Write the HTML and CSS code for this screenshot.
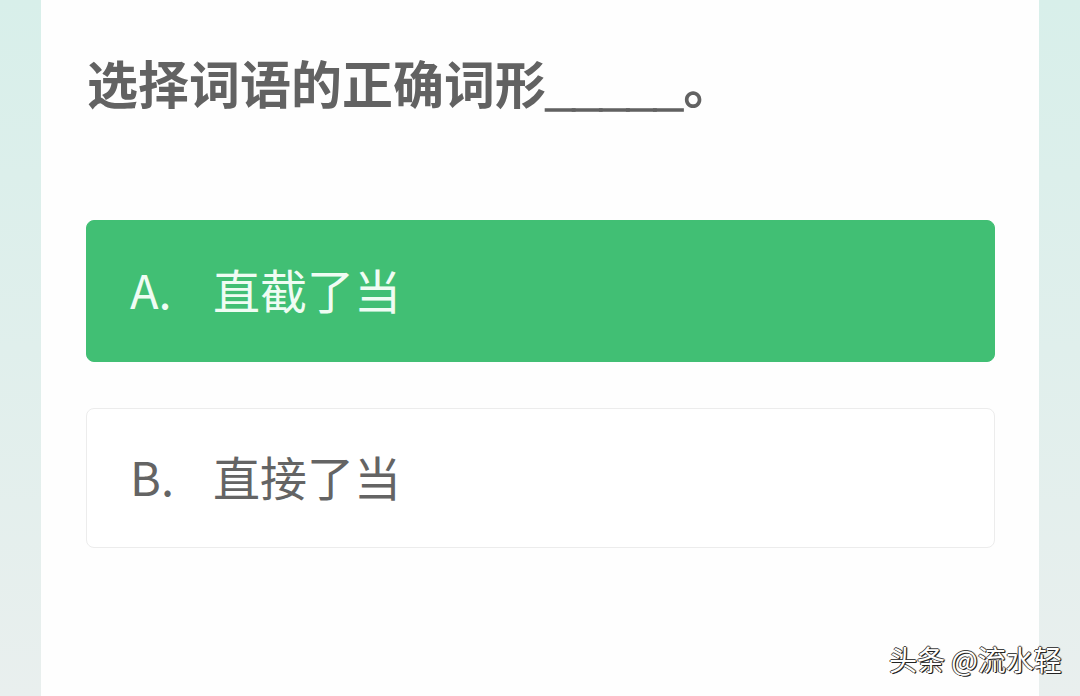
FILE: index.html
```html
<!DOCTYPE html>
<html lang="zh">
<head>
<meta charset="utf-8">
<link rel="stylesheet" href="styles.css">
</head>
<body>
<div class="page">
  <main class="panel">
    <h1 class="question">选择词语的正确词形<span class="blank">_____</span>。</h1>
    <div class="options">
      <div class="option selected"><span class="letter">A.</span><span class="word">直截了当</span></div>
      <div class="option"><span class="letter">B.</span><span class="word">直接了当</span></div>
    </div>
  </main>
  <div class="watermark">头条 @流水轻</div>
</div>
</body>
</html>
```
FILE: styles.css
```css
html, body {
  margin: 0;
  padding: 0;
}
body {
  width: 1080px;
  height: 696px;
  overflow: hidden;
  font-family: "Noto Sans CJK SC", "Noto Sans", sans-serif;
}
.page {
  position: relative;
  width: 1080px;
  height: 696px;
  box-sizing: border-box;
  padding: 0 41px 0 41px;
  background: linear-gradient(180deg, #d8efea 0%, #e0efec 50%, #e9efee 100%);
}
.panel {
  height: 100%;
  background: #fefefe;
  box-sizing: border-box;
  padding: 52px 44px 0 45px;
}
.question {
  margin: 0 0 0 1px;
  font-size: 51px;
  line-height: 60px;
  font-weight: 700;
  color: #626262;
  letter-spacing: 0;
}
.blank {
  font-family: "Liberation Sans", sans-serif;
  letter-spacing: -1.3px;
  margin-right: 2px;
  -webkit-text-stroke: 1.6px #626262;
  position: relative;
  top: 1px;
}
.options {
  margin-top: 103px;
  display: flex;
  flex-direction: column;
  gap: 46px;
}
.option {
  height: 140px;
  box-sizing: border-box;
  border: 1px solid #ececec;
  border-radius: 8px;
  display: flex;
  align-items: center;
  padding: 0 0 5px 43px;
  font-size: 47px;
  color: #646464;
  background: #ffffff;
}
.option.selected {
  height: 142px;
  border-color: #41bf74;
  background: #41bf74;
  color: #effcf3;
}
.letter {
  width: 83px;
}
.word {
  letter-spacing: 0;
}
.watermark {
  position: absolute;
  left: 889px;
  top: 639px;
  font-size: 28px;
  line-height: 40px;
  color: #ffffff;
  text-shadow: 1px 1px 0 #222, -1px 0 0 #444, 0 -1px 0 #444, 1px 0 1px #111;
  white-space: nowrap;
}
```
